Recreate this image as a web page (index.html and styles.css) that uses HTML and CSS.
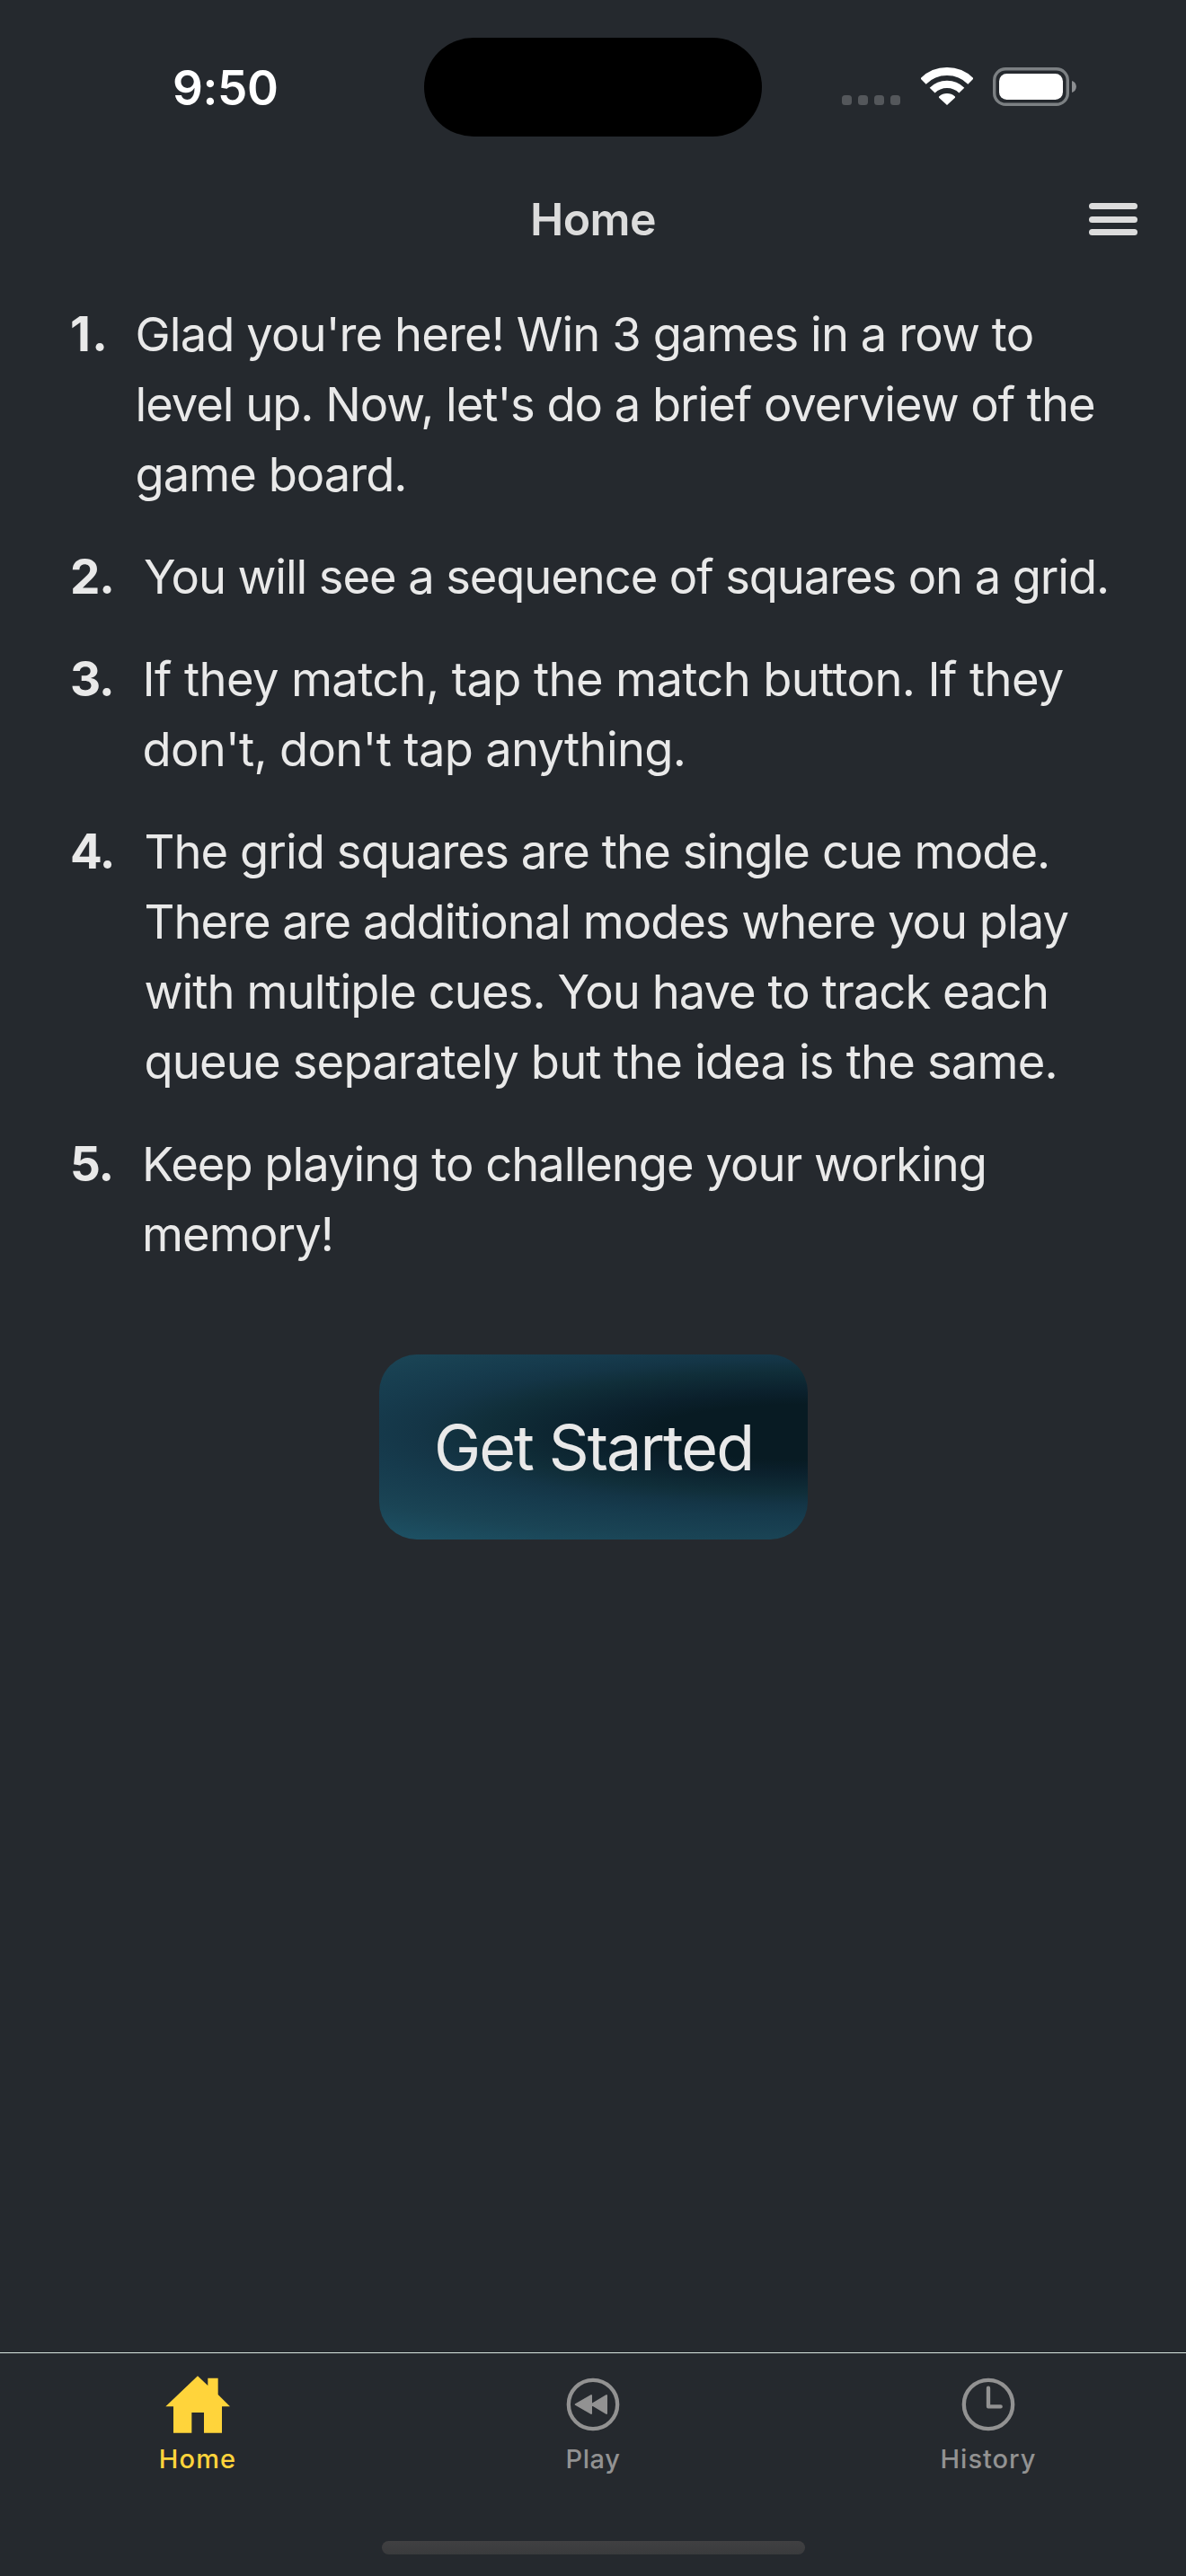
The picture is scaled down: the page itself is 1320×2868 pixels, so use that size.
FILE: index.html
```html
<!DOCTYPE html>
<html lang="en">
<head>
<meta charset="utf-8">
<title>Home</title>
<link rel="stylesheet" href="styles.css">
</head>
<body>
<div class="screen">
  <div class="status">
    <div class="status-left"><span class="time">9:50</span></div>
    <div class="island"></div>
    <div class="status-right">
      <svg class="signal" viewBox="0 0 65 11"><rect width="11" height="11" rx="3.5"/><rect x="18" width="11" height="11" rx="3.5"/><rect x="36" width="11" height="11" rx="3.5"/><rect x="54" width="11" height="11" rx="3.5"/></svg>
      <svg class="wifi" viewBox="0 0 174 126">
        <g fill="none" stroke="#fff"><path stroke-width="27" d="M7.5 46.5A112.5 112.5 0 0 1 166.500 46.500"/><path stroke-width="25" d="M37.900 76.900A69.500 69.500 0 0 1 136.100 76.900"/></g>
        <path fill="#fff" d="M87 126L60 101Q59 98 61 97A39 39 0 0 1 113 97Q115 98 114 101Z"/>
      </svg>
      <svg class="battery" viewBox="0 0 93 43">
        <rect x="1.700" y="1.700" width="81.600" height="39.600" rx="12.500" fill="none" stroke="#7c8083" stroke-width="3.400"/>
        <rect x="7" y="7" width="71" height="29" rx="8.500" fill="#fff"/>
        <path fill="#8c8e91" d="M88 15C94.500 16.500 94.500 26.500 88 28Z"/>
      </svg>
    </div>
  </div>

  <header class="header">
    <h1 class="title">Home</h1>
    <div class="menu"><span></span><span></span><span></span></div>
  </header>

  <main class="main">
    <ol class="steps">
      <li><b>1.</b><p><span class="a1">Glad you're here! Win 3 games in a row to</span><span class="a2">level up. Now, let's do a brief overview of the</span><span class="a3">game board.</span></p></li>
      <li><b>2.</b><p><span class="b1">You will see a sequence of squares on a grid.</span></p></li>
      <li><b>3.</b><p><span class="c1">If they match, tap the match button. If they</span><span class="c2">don't, don't tap anything.</span></p></li>
      <li><b>4.</b><p><span class="d1">The grid squares are the single cue mode.</span><span class="d2">There are additional modes where you play</span><span class="d3">with multiple cues. You have to track each</span><span class="d4">queue separately but the idea is the same.</span></p></li>
      <li><b>5.</b><p><span class="e1">Keep playing to challenge your working</span><span class="e2">memory!</span></p></li>
    </ol>
    <button class="start">Get Started</button>
  </main>

  <footer class="tabbar">
    <nav class="tabs">
      <a class="tab active">
        <svg viewBox="552 123 216 216"><path fill="currentColor" d="M660 136L694 168V143H728V198L768 238H741V326H681V258H640V326H579V238H553Z"/></svg>
        <span class="l1">Home</span>
      </a>
      <a class="tab">
        <svg viewBox="552 123 216 216"><circle cx="660" cy="231" r="81.500" fill="none" stroke="currentColor" stroke-width="13"/><path fill="currentColor" stroke="currentColor" stroke-width="6" stroke-linejoin="round" d="M602 231L654 201V261ZM655 231L705 201V261Z"/></svg>
        <span class="l2">Play</span>
      </a>
      <a class="tab">
        <svg viewBox="552 123 216 216"><circle cx="660" cy="231" r="81.500" fill="none" stroke="currentColor" stroke-width="13"/><path fill="none" stroke="currentColor" stroke-width="13" stroke-linecap="round" stroke-linejoin="round" d="M660 176V238H701"/></svg>
        <span class="l3">History</span>
      </a>
    </nav>
    <div class="indicator"></div>
  </footer>
</div>
</body>
</html>
```
FILE: styles.css
```css
* { box-sizing: border-box; margin: 0; padding: 0; }
body { background: #25292e; font-family: Inter, "Liberation Sans", sans-serif; }
.screen { width: 1320px; height: 2868px; display: flex; flex-direction: column; background: #25292e; color: #e9e9e9; }

.status { height: 177px; padding-top: 42px; display: flex; align-items: flex-start; }
.status-left { width: 472px; padding-left: 192px; height: 110px; display: flex; align-items: center; }
.time { font-size: 53px; line-height: 64px; font-weight: 600; letter-spacing: -0.4px; padding-top: 1px; color: #fff; }
.island { width: 376px; height: 110px; border-radius: 55px; background: #000; }
.status-right { height: 76px; padding-left: 89px; display: flex; align-items: flex-end; }
.signal { width: 65px; height: 11px; fill: #54575b; margin-bottom: 1px; }
.wifi { width: 58px; height: 42px; margin: 0 0 1px 22.500px; }
.battery { width: 93px; height: 43px; margin-left: 22.500px; }

.header { height: 132px; display: grid; grid-template-columns: 1fr auto 1fr; align-items: center; padding-top: 2px; }
.title { grid-column: 2; font-size: 50px; line-height: 60px; font-weight: 600; letter-spacing: -0.6px; color: #dcdcdc; }
.menu { justify-self: end; margin-right: 54px; width: 54px; display: flex; flex-direction: column; gap: 7.500px; }
.menu span { height: 7px; border-radius: 3.500px; background: #dcdcdc; }

.main { flex: 1; padding: 24px 0 0 78px; }
.steps { list-style: none; display: flex; flex-direction: column; gap: 36px; }
.steps li { display: flex; font-size: 52.500px; line-height: 78px; }
.steps b { font-size: 53px; font-weight: 700; width: 82px; letter-spacing: -1.2px; }
.steps li:nth-child(1) b { width: 72.600px; letter-spacing: 1.500px; }
.steps li:nth-child(3) b { width: 80.500px; }
.steps li:nth-child(4) b { width: 82.500px; }
.steps li:nth-child(5) b { width: 80px; }
.steps p span { display: block; white-space: nowrap; }
/* per-line tracking */
.a1 { letter-spacing: -0.9px; }
.a2 { letter-spacing: -1.04px; }
.a3 { letter-spacing: -1px; }
.b1 { letter-spacing: -1.1px; }
.c1 { letter-spacing: -0.62px; }
.c2 { letter-spacing: -0.7px; }
.d1 { letter-spacing: -0.93px; }
.d2 { letter-spacing: -1.01px; }
.d3 { letter-spacing: -0.93px; }
.d4 { letter-spacing: -0.83px; }
.e1 { letter-spacing: -0.99px; }
.e2 { letter-spacing: -0.89px; }

.start {
  display: block; width: 477px; height: 206px; margin: 95px 0 0 344px; padding: 2px 0 0; border: 0; border-radius: 42px;
  font: 400 70px/84px Inter, "Liberation Sans", sans-serif; letter-spacing: -1.93px; color: #e9e9e9;
  background: radial-gradient(ellipse 500px 96px at 98% 42%, #081b23 0%, #081b23 32%, #0b202c 46%, #102e39 70%, #143546 84%, #163b4d 98%, #1a4455 124%, #1d5063 150%);
}

.tabbar { height: 249px; border-top: 1px solid #d8e6e0; display: flex; flex-direction: column; align-items: center; }
.tabs { width: 100%; height: 209px; padding-top: 21px; display: grid; grid-template-columns: repeat(3, 1fr); }
.tab { display: flex; flex-direction: column; align-items: center; gap: 7px; font-size: 29px; line-height: 36px; font-weight: 500; color: #929292; }
.tab.active { color: #ffd43b; }
.tab svg { width: 72px; height: 72px; }
.l1 { letter-spacing: 1.1px; }
.l2 { letter-spacing: 0.6px; }
.l3 { letter-spacing: 1px; }
.indicator { width: 471px; height: 15px; border-radius: 8px; background: linear-gradient(#404042, #3a3b3d); }
```
